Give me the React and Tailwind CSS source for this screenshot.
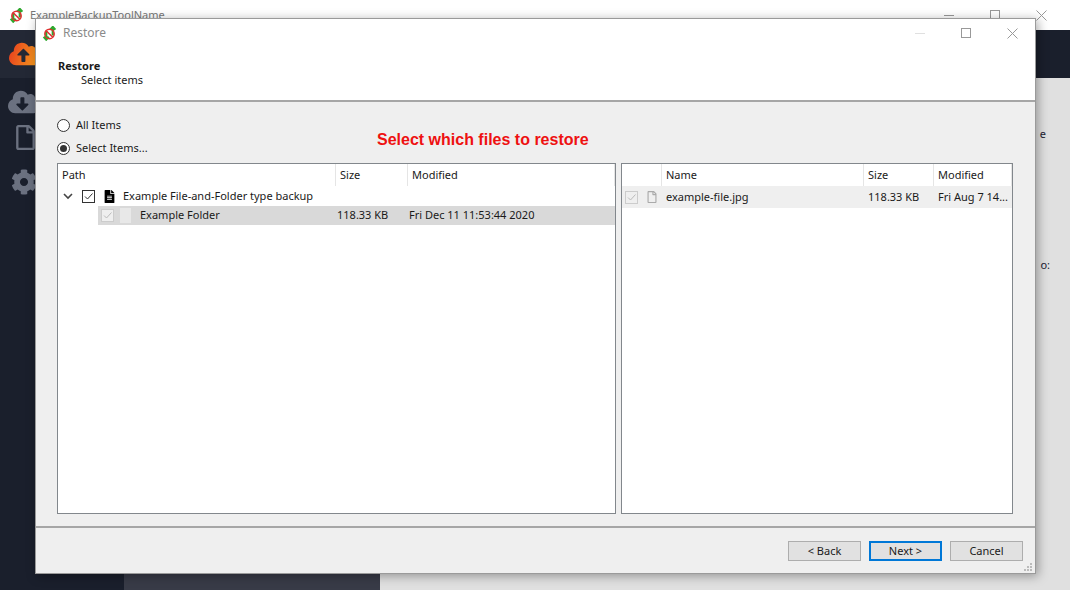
import React from "react";
import { FaCloudUploadAlt, FaCloudDownloadAlt, FaCog, FaFileAlt, FaRegFile } from "react-icons/fa";

const font = "font-['Noto_Sans','Open_Sans',sans-serif]";

const AppLogo = ({ className }) => (
  <svg viewBox="0 0 16 16" className={className}>
    <path d="M4.5 15V6M1.8 8.5 4.5 5.5 7.2 8.5" fill="none" stroke="#2fa82f" strokeWidth="2.4" transform="rotate(180 4.5 10)" />
    <path d="M11.5 1v9M8.8 4 11.5 1l2.7 3" fill="none" stroke="#2fa82f" strokeWidth="2.4" />
    <circle cx="8" cy="8.5" r="5" fill="none" stroke="#e03030" strokeWidth="1.6" />
    <path d="M4.5 5 11.5 12" stroke="#e03030" strokeWidth="1.6" />
  </svg>
);

const WindowButtons = ({ minColor }) => (
  <div className="flex items-center">
    <div className="w-[46px] flex justify-center">
      <div className={`w-[10px] h-px ${minColor}`} />
    </div>
    <div className="w-[46px] flex justify-center">
      <div className="w-[10px] h-[10px] border border-[#999999]" />
    </div>
    <div className="w-[46px] flex justify-center">
      <svg viewBox="0 0 11 11" className="w-[11px] h-[11px]">
        <path d="M.5.5l10 10M10.5.5l-10 10" stroke="#999999" strokeWidth="1" />
      </svg>
    </div>
  </div>
);

const Radio = ({ label, checked }) => (
  <div className="flex items-center h-[13px]">
    <div className="w-[13px] h-[13px] rounded-full border border-[#333333] bg-white flex items-center justify-center">
      {checked && <div className="w-[7px] h-[7px] rounded-full bg-[#333333]" />}
    </div>
    <span className="ml-[6px] text-[11px] text-[#1a1a1a]">{label}</span>
  </div>
);

const Check = ({ disabled }) => (
  <div className={`w-[13px] h-[13px] border flex items-center justify-center shrink-0 ${disabled ? "border-[#cccccc] bg-[#efefef]" : "border-[#333333] bg-white"}`}>
    <svg viewBox="0 0 11 11" className="w-[11px] h-[11px]">
      <path d="M2 5.5 4.5 8 9.5 2.5" fill="none" stroke={disabled ? "#bbbbbb" : "#333333"} strokeWidth="1" />
    </svg>
  </div>
);

const HeaderCell = ({ width, label, pad = "pl-[4px]" }) => (
  <div className={`h-[22px] flex items-center border-r border-[#e5e5e5] shrink-0 text-[11px] text-[#1a1a1a] ${pad} ${width}`}>{label}</div>
);

const FooterButton = ({ label, primary }) => (
  <button className={`w-[73px] h-[20px] flex items-center justify-center text-[11px] text-[#1a1a1a] bg-[#e1e1e1] ${primary ? "border-2 border-[#0078d7]" : "border border-[#adadad]"}`}>
    {label}
  </button>
);

const App = () => {
  return (
    <div className={`relative w-[1070px] h-[590px] overflow-hidden bg-[#e0e0e0] ${font}`}>
      {/* window behind the dialog */}
      <div className="h-[30px] bg-white flex items-center justify-between pl-[9px] pr-[6px]">
        <div className="flex items-center gap-[6px]">
          <AppLogo className="w-[15px] h-[15px]" />
          <span className="text-[11px] text-[#777777]">ExampleBackupToolName</span>
        </div>
        <WindowButtons minColor="bg-[#999999]" />
      </div>
      <div className="flex h-[560px]">
        <div className="w-[124px] bg-[#1a1f2c] flex flex-col items-start">
          <div className="w-full h-[48px] bg-[#232835] pl-[9px] flex items-center">
            <svg width="0" height="0" className="absolute">
              <linearGradient id="cloudFill" x1="0" y1="0" x2="1" y2="0.2">
                <stop offset="0" stopColor="#e53a1e" />
                <stop offset="1" stopColor="#f79a1e" />
              </linearGradient>
            </svg>
            <FaCloudUploadAlt size={32} fill="url(#cloudFill)" />
          </div>
          <FaCloudDownloadAlt size={32} className="ml-[8px] mt-[8px] text-[#6b7180]" />
          <FaRegFile size={25} className="ml-[13px] mt-[7px] text-[#6b7180]" />
          <FaCog size={26} className="ml-[11px] mt-[19px] text-[#6b7180]" />
        </div>
        <div className="flex-1 relative flex flex-col">
          <div className="h-[48px] bg-[#1a1f2c]" />
          <div className="flex-1 flex flex-col items-end pr-[24px]">
            <span className="mt-[48px] text-[11px] text-[#222233]">e</span>
            <span className="mt-[114px] text-[11px] text-[#222233] -mr-[4px]">o:</span>
            <div className="flex-1" />
          </div>
          <div className="h-[17px] w-[256px] bg-[#383b47]" />
        </div>
      </div>

      {/* restore dialog */}
      <div className="absolute left-[35px] top-[18px] w-[1001px] h-[556px] bg-[#efefef] border border-[#9a9a9a] shadow-[2px_2px_10px_rgba(0,0,0,0.35)] flex flex-col">
        <div className="h-[83px] bg-white border-b-2 border-[#a6a6a6] shrink-0">
          <div className="h-[28px] flex items-center justify-between pl-[6px]">
            <div className="flex items-center gap-[6px]">
              <AppLogo className="w-[15px] h-[15px]" />
              <span className="text-[12px] text-[#8a8a8a]">Restore</span>
            </div>
            <WindowButtons minColor="bg-[#e0e0e0]" />
          </div>
          <div className="pl-[22px] pt-[12px] text-[11px] leading-[14px] text-[#1a1a1a]">
            <div className="font-bold">Restore</div>
            <div className="pl-[23px]">Select items</div>
          </div>
        </div>

        <div className="flex-1 relative px-[21px] pt-[17px]">
          <Radio label="All Items" />
          <div className="h-[10px]" />
          <Radio label="Select Items..." checked />
          <div className="absolute left-[341px] top-[28px] text-[16px] leading-[20px] font-bold text-[#ee1111] font-['Liberation_Sans',sans-serif]">
            Select which files to restore
          </div>

          <div className="flex gap-[5px] mt-[8px]">
            <div className="w-[559px] h-[351px] bg-white border border-[#82878c]">
              <div className="flex">
                <HeaderCell width="w-[278px]" label="Path" />
                <HeaderCell width="w-[72px]" label="Size" pad="pl-[4px]" />
                <HeaderCell width="flex-1" label="Modified" />
              </div>
              <div className="h-[20px] flex items-center pl-[5px] text-[11px] text-[#1a1a1a]">
                <svg viewBox="0 0 10 10" className="w-[10px] h-[10px]">
                  <path d="M1 3l4 4 4-4" fill="none" stroke="#444444" strokeWidth="1.6" />
                </svg>
                <div className="ml-[9px]"><Check /></div>
                <FaFileAlt size={13} className="ml-[8px] text-black" />
                <span className="ml-[7px]">Example File-and-Folder type backup</span>
              </div>
              <div className="ml-[40px] h-[19px] bg-[#d9d9d9] flex items-center text-[11px] text-[#1a1a1a]">
                <div className="ml-[3px]"><Check disabled /></div>
                <div className="ml-[6px] w-[11px] h-[15px] bg-[#e8e8e8]" />
                <span className="ml-[9px] w-[197px]">Example Folder</span>
                <span className="w-[72px]">118.33 KB</span>
                <span>Fri Dec 11 11:53:44 2020</span>
              </div>
            </div>

            <div className="w-[392px] h-[351px] bg-white border border-[#82878c]">
              <div className="flex">
                <HeaderCell width="w-[40px]" label="" />
                <HeaderCell width="w-[202px]" label="Name" />
                <HeaderCell width="w-[70px]" label="Size" />
                <HeaderCell width="flex-1" label="Modified" />
              </div>
              <div className="h-[22px] bg-[#efefef] flex items-center text-[11px] text-[#1a1a1a]">
                <div className="ml-[3px]"><Check disabled /></div>
                <FaRegFile size={12} className="ml-[8px] text-[#aaaaaa]" />
                <span className="ml-[8px] w-[202px]">example-file.jpg</span>
                <span className="w-[70px]">118.33 KB</span>
                <span className="whitespace-nowrap">Fri Aug 7 14...</span>
              </div>
            </div>
          </div>
        </div>

        <div className="relative h-[47px] border-t-2 border-[#a6a6a6] shrink-0 flex items-start justify-end gap-[8px] pt-[13px] pr-[12px]">
          <FooterButton label="< Back" />
          <FooterButton label="Next >" primary />
          <FooterButton label="Cancel" />
          <svg viewBox="0 0 9 9" className="absolute right-[3px] bottom-[2px] w-[9px] h-[9px]">
            <path d="M7 1h2v2H7zM4 4h2v2H4zM7 4h2v2H7zM1 7h2v2H1zM4 7h2v2H4zM7 7h2v2H7z" fill="#bbbbbb" />
          </svg>
        </div>
      </div>
    </div>
  );
};

export default App;
